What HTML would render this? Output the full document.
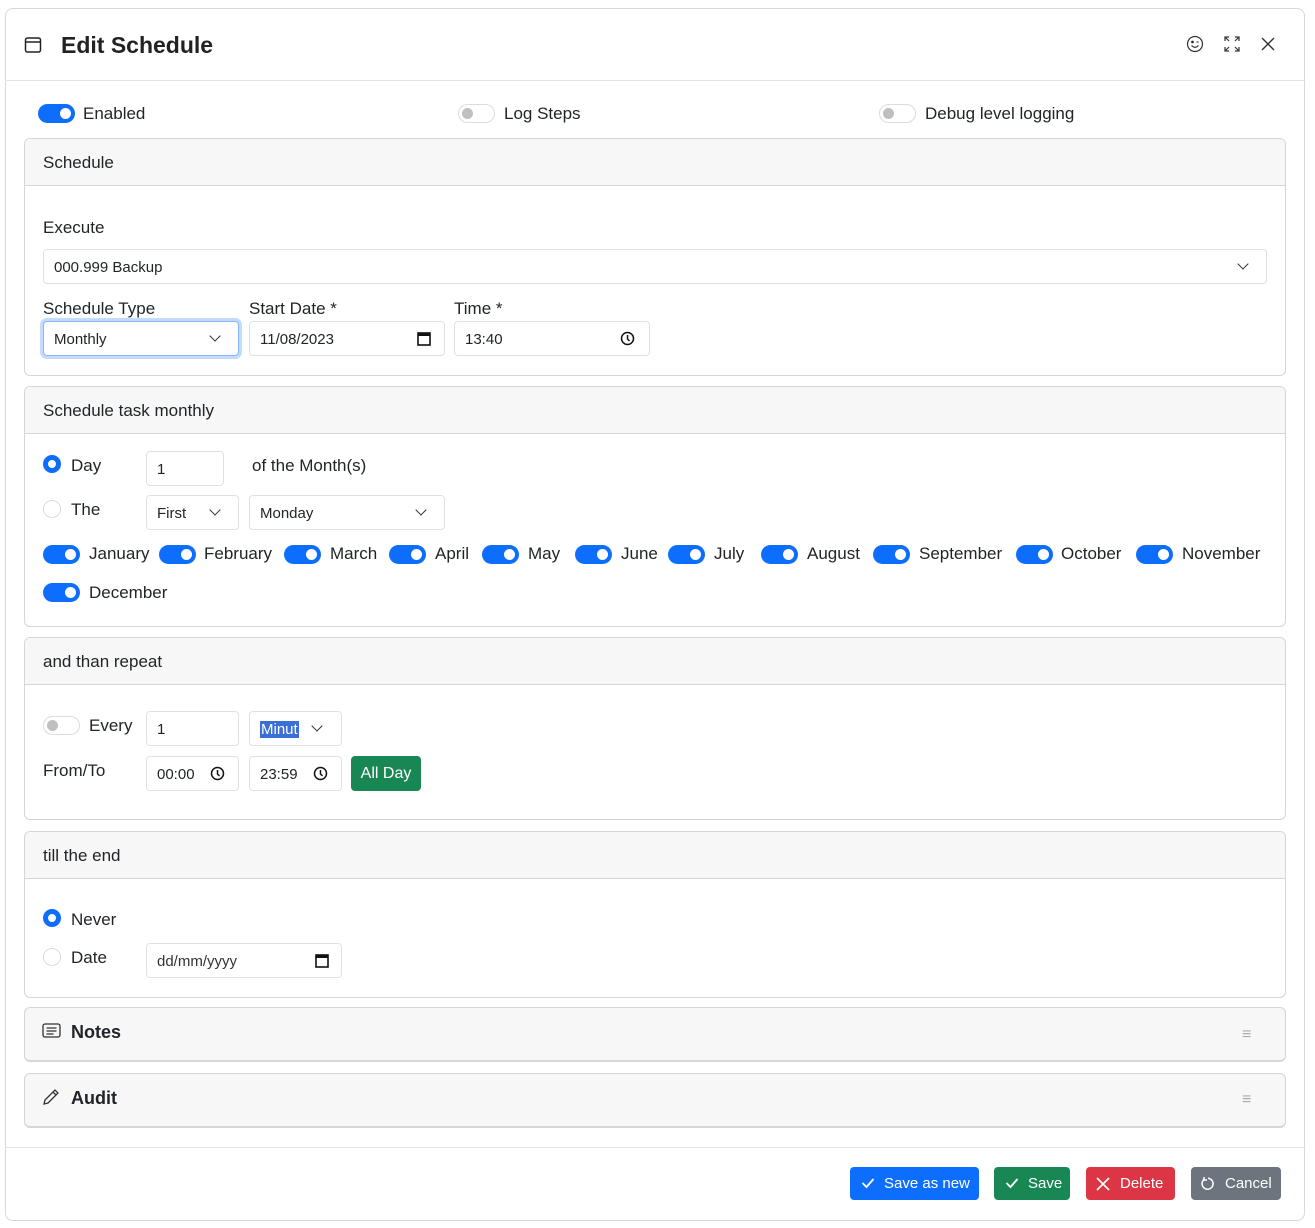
<!DOCTYPE html>
<html><head><meta charset="utf-8"><style>
*{box-sizing:border-box;margin:0;padding:0}
body{width:1315px;height:1228px;background:#fff;font-family:"Liberation Sans",sans-serif;color:#212529;position:relative;overflow:hidden}
.a{position:absolute}
.modal{position:absolute;left:5px;top:8px;width:1300px;height:1213px;border:1px solid #d8d8d8;border-radius:8px;background:#fff}
.t{position:absolute;font-size:17px;line-height:20px;white-space:nowrap}
.card{position:absolute;left:24px;width:1262px;border:1px solid #d6d6d6;border-radius:6px;background:#fff;overflow:hidden}
.ch{background:#f7f7f7;border-bottom:1px solid #d6d6d6;height:47px;font-size:17px;padding:14px 18px;line-height:20px}
.inp{position:absolute;border:1px solid #dee2e6;border-radius:4px;height:35px;font-size:15px;line-height:35px;padding-left:10px;background:#fff;white-space:nowrap}
.tg{position:absolute;width:37px;height:19px;border-radius:10px;background:#0d6efd}
.tg::after{content:"";position:absolute;right:4px;top:4px;width:11px;height:11px;border-radius:50%;background:#fff}
.tg.off{background:#fff;border:1px solid #dcdcdc}
.tg.off::after{left:3px;top:3px;right:auto;background:#bfbfbf}
.chev{position:absolute;width:8px;height:8px;border-right:1.6px solid #333;border-bottom:1.6px solid #333;transform:rotate(45deg)}
.btn{position:absolute;top:1167px;height:33px;border-radius:4px;color:#fff;font-size:15px;line-height:34px;padding-left:34px;white-space:nowrap}
svg{position:absolute}
</style></head><body>
<div class="modal"></div>
<svg style="left:24px;top:36px" width="18" height="18" viewBox="0 0 18 18"><rect x="1.5" y="2" width="15" height="14" rx="2" fill="none" stroke="#222" stroke-width="1.5"/><line x1="1.5" y1="6" x2="16.5" y2="6" stroke="#222" stroke-width="1.5"/></svg>
<div class="t" style="left:61px;top:32px;font-size:23px;line-height:26px;font-weight:bold;color:#222">Edit Schedule</div>
<svg style="left:1186px;top:35px" width="18" height="18" viewBox="0 0 18 18" fill="none" stroke="#333" stroke-width="1.2"><circle cx="9" cy="9" r="7.5"/><circle cx="6.5" cy="7" r=".8" fill="#333"/><line x1="10.5" y1="7" x2="12.5" y2="7"/><path d="M5.5 10.5q3.5 3.5 7 0"/></svg>
<svg style="left:1223px;top:35px" width="18" height="18" viewBox="0 0 18 18" fill="none" stroke="#333" stroke-width="1.2"><path d="M2 6V2h4M2 2l4 4M12 2h4v4M16 2l-4 4M2 12v4h4M2 16l4-4M16 12v4h-4M16 16l-4-4"/></svg>
<svg style="left:1260px;top:36px" width="16" height="16" viewBox="0 0 16 16" stroke="#333" stroke-width="1.4"><path d="M2 2l12 12M14 2L2 14"/></svg>
<div class="a" style="left:5px;top:80px;width:1300px;border-top:1px solid #e3e3e3"></div>

<div class="tg" style="left:38px;top:104px"></div><div class="t" style="left:83px;top:104px">Enabled</div>
<div class="tg off" style="left:458px;top:104px"></div><div class="t" style="left:504px;top:104px">Log Steps</div>
<div class="tg off" style="left:879px;top:104px"></div><div class="t" style="left:925px;top:104px">Debug level logging</div>

<div class="card" style="top:138px;height:238px"><div class="ch">Schedule</div></div>
<div class="t" style="left:43px;top:218px">Execute</div>
<div class="inp" style="left:43px;top:249px;width:1224px">000.999 Backup</div><div class="chev" style="left:1239px;top:260px"></div>
<div class="t" style="left:43px;top:299px">Schedule Type</div>
<div class="t" style="left:249px;top:299px">Start Date *</div>
<div class="t" style="left:454px;top:299px">Time *</div>
<div class="inp" style="left:43px;top:321px;width:196px;border-color:#86b7fe;box-shadow:0 0 0 3px rgba(13,110,253,.25)">Monthly</div><div class="chev" style="left:211px;top:332px"></div>
<div class="inp" style="left:249px;top:321px;width:196px">11/08/2023</div>
<svg style="left:417px;top:331px" width="14" height="15" viewBox="0 0 14 15"><rect x="1" y="2" width="12" height="12" fill="none" stroke="#111" stroke-width="1.6"/><rect x="1" y="2" width="12" height="3" fill="#111"/></svg>
<div class="inp" style="left:454px;top:321px;width:196px">13:40</div>
<svg style="left:620px;top:331px" width="15" height="15" viewBox="0 0 15 15" fill="none" stroke="#111" stroke-width="1.5"><circle cx="7.5" cy="7.5" r="6"/><path d="M7.5 4v4l2 2"/></svg>

<div class="card" style="top:386px;height:241px"><div class="ch">Schedule task monthly</div></div>
<div class="a" style="left:43px;top:455px;width:18px;height:18px;border-radius:50%;border:5px solid #0d6efd;background:#fff"></div>
<div class="t" style="left:71px;top:456px">Day</div>
<div class="inp" style="left:146px;top:451px;width:78px">1</div>
<div class="t" style="left:252px;top:456px">of the Month(s)</div>
<div class="a" style="left:43px;top:500px;width:18px;height:18px;border-radius:50%;border:1px solid #dcdcdc"></div>
<div class="t" style="left:71px;top:500px">The</div>
<div class="inp" style="left:146px;top:495px;width:93px">First</div><div class="chev" style="left:211px;top:506px"></div>
<div class="inp" style="left:249px;top:495px;width:196px">Monday</div><div class="chev" style="left:417px;top:506px"></div>
<div class="tg" style="left:43px;top:545px"></div><div class="t" style="left:89px;top:544px">January</div>
<div class="tg" style="left:159px;top:545px"></div><div class="t" style="left:204px;top:544px">February</div>
<div class="tg" style="left:284px;top:545px"></div><div class="t" style="left:330px;top:544px">March</div>
<div class="tg" style="left:389px;top:545px"></div><div class="t" style="left:435px;top:544px">April</div>
<div class="tg" style="left:482px;top:545px"></div><div class="t" style="left:528px;top:544px">May</div>
<div class="tg" style="left:575px;top:545px"></div><div class="t" style="left:621px;top:544px">June</div>
<div class="tg" style="left:668px;top:545px"></div><div class="t" style="left:714px;top:544px">July</div>
<div class="tg" style="left:761px;top:545px"></div><div class="t" style="left:807px;top:544px">August</div>
<div class="tg" style="left:873px;top:545px"></div><div class="t" style="left:919px;top:544px">September</div>
<div class="tg" style="left:1016px;top:545px"></div><div class="t" style="left:1061px;top:544px">October</div>
<div class="tg" style="left:1136px;top:545px"></div><div class="t" style="left:1182px;top:544px">November</div>
<div class="tg" style="left:43px;top:583px"></div><div class="t" style="left:89px;top:583px">December</div>

<div class="card" style="top:637px;height:183px"><div class="ch">and than repeat</div></div>
<div class="tg off" style="left:43px;top:716px"></div><div class="t" style="left:89px;top:716px">Every</div>
<div class="inp" style="left:146px;top:711px;width:93px">1</div>
<div class="inp" style="left:249px;top:711px;width:93px"><span style="background:#3a6fd8;color:#fff;padding:0 1px">Minut</span></div><div class="chev" style="left:313px;top:722px"></div>
<div class="t" style="left:43px;top:761px">From/To</div>
<div class="inp" style="left:146px;top:756px;width:93px">00:00</div>
<svg style="left:210px;top:766px" width="15" height="15" viewBox="0 0 15 15" fill="none" stroke="#111" stroke-width="1.5"><circle cx="7.5" cy="7.5" r="6"/><path d="M7.5 4v4l2 2"/></svg>
<div class="inp" style="left:249px;top:756px;width:93px">23:59</div>
<svg style="left:313px;top:766px" width="15" height="15" viewBox="0 0 15 15" fill="none" stroke="#111" stroke-width="1.5"><circle cx="7.5" cy="7.5" r="6"/><path d="M7.5 4v4l2 2"/></svg>
<div class="a" style="left:351px;top:756px;width:70px;height:35px;background:#198754;border-radius:4px;color:#fff;font-size:16px;line-height:35px;text-align:center">All Day</div>

<div class="card" style="top:831px;height:167px"><div class="ch">till the end</div></div>
<div class="a" style="left:43px;top:909px;width:18px;height:18px;border-radius:50%;border:5px solid #0d6efd;background:#fff"></div>
<div class="t" style="left:71px;top:910px">Never</div>
<div class="a" style="left:43px;top:948px;width:18px;height:18px;border-radius:50%;border:1px solid #dcdcdc"></div>
<div class="t" style="left:71px;top:948px">Date</div>
<div class="inp" style="left:146px;top:943px;width:196px;color:#333">dd/mm/yyyy</div>
<svg style="left:315px;top:953px" width="14" height="15" viewBox="0 0 14 15"><rect x="1" y="2" width="12" height="12" fill="none" stroke="#111" stroke-width="1.6"/><rect x="1" y="2" width="12" height="3" fill="#111"/></svg>

<div class="card" style="top:1007px;height:55px;background:#f7f7f7;border-bottom-width:2px"></div>
<svg style="left:42px;top:1023px" width="19" height="16" viewBox="0 0 19 16" fill="none" stroke="#333" stroke-width="1.3"><rect x="1" y="1" width="17" height="13" rx="2"/><path d="M4.5 5h10M4.5 8h10M4.5 11h7"/></svg>
<div class="t" style="left:71px;top:1022px;font-weight:bold;font-size:18px">Notes</div>
<div class="t" style="left:1242px;top:1025px;color:#aaa;font-size:16px">≡</div>
<div class="card" style="top:1073px;height:55px;background:#f7f7f7;border-bottom-width:2px"></div>
<svg style="left:42px;top:1088px" width="18" height="18" viewBox="0 0 18 18" fill="none" stroke="#333" stroke-width="1.3"><path d="M2 16l1-4L13 2l3 3L6 15z"/><path d="M11 4l3 3"/></svg>
<div class="t" style="left:71px;top:1088px;font-weight:bold;font-size:18px">Audit</div>
<div class="t" style="left:1242px;top:1090px;color:#aaa;font-size:16px">≡</div>

<div class="a" style="left:5px;top:1147px;width:1300px;border-top:1px solid #e3e3e3"></div>
<div class="btn" style="left:850px;width:129px;background:#0d6efd">Save as new</div>
<div class="btn" style="left:994px;width:76px;background:#198754">Save</div>
<div class="btn" style="left:1086px;width:89px;background:#dc3545">Delete</div>
<div class="btn" style="left:1191px;width:90px;background:#6c757d">Cancel</div>
<svg style="left:861px;top:1177px" width="14" height="12" viewBox="0 0 14 12" fill="none" stroke="#fff" stroke-width="1.8"><path d="M1.5 6l4 4 7-8"/></svg>
<svg style="left:1005px;top:1177px" width="14" height="12" viewBox="0 0 14 12" fill="none" stroke="#fff" stroke-width="1.8"><path d="M1.5 6l4 4 7-8"/></svg>
<svg style="left:1096px;top:1177px" width="14" height="14" viewBox="0 0 14 14" stroke="#fff" stroke-width="1.6"><path d="M1 1l12 12M13 1L1 13"/></svg>
<svg style="left:1200px;top:1176px" width="15" height="15" viewBox="0 0 15 15" fill="none" stroke="#fff" stroke-width="1.5"><path d="M4 3.5a5.5 5.5 0 1 0 4-1.3"/><path d="M4 1v3h3" /></svg>
</body></html>
